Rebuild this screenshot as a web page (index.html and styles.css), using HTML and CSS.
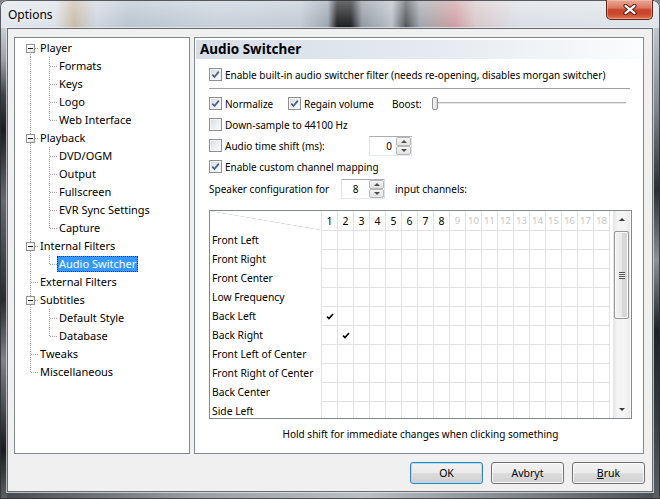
FILE: index.html
```html
<!DOCTYPE html>
<html>
<head>
<meta charset="utf-8">
<title>Options</title>
<link rel="stylesheet" href="styles.css">
</head>
<body>
<div class="window">
  <div class="titlebar">
    <span class="title">Options</span>
    <div class="close">
      <svg width="14" height="11" viewBox="0 0 14 11"><path d="M2.5 1.8 L11.5 9.2 M11.5 1.8 L2.5 9.2" stroke="#5a1c12" stroke-width="4.2" stroke-linecap="round"/><path d="M2.5 1.8 L11.5 9.2 M11.5 1.8 L2.5 9.2" stroke="#fff" stroke-width="2.2" stroke-linecap="round"/></svg>
    </div>
  </div>
  <div class="client">
    <div class="main">
      <div class="tree">
        <div class="tn root first"><span class="exp"></span><span class="lbl">Player</span></div>
        <div class="tn child"><span class="lbl">Formats</span></div>
        <div class="tn child"><span class="lbl">Keys</span></div>
        <div class="tn child"><span class="lbl">Logo</span></div>
        <div class="tn child last"><span class="lbl">Web Interface</span></div>
        <div class="tn root"><span class="exp"></span><span class="lbl">Playback</span></div>
        <div class="tn child"><span class="lbl">DVD/OGM</span></div>
        <div class="tn child"><span class="lbl">Output</span></div>
        <div class="tn child"><span class="lbl">Fullscreen</span></div>
        <div class="tn child"><span class="lbl">EVR Sync Settings</span></div>
        <div class="tn child last"><span class="lbl">Capture</span></div>
        <div class="tn root"><span class="exp"></span><span class="lbl">Internal Filters</span></div>
        <div class="tn child last"><span class="lbl sel">Audio Switcher</span></div>
        <div class="tn root leaf"><span class="lbl">External Filters</span></div>
        <div class="tn root"><span class="exp"></span><span class="lbl">Subtitles</span></div>
        <div class="tn child"><span class="lbl">Default Style</span></div>
        <div class="tn child last"><span class="lbl">Database</span></div>
        <div class="tn root leaf"><span class="lbl">Tweaks</span></div>
        <div class="tn root leaf last"><span class="lbl">Miscellaneous</span></div>
      </div>
      <div class="page">
        <div class="page-head">Audio Switcher</div>
        <div class="page-body">
          <div class="row">
            <span class="cbl"><span class="cb"><svg viewBox="0 0 9 9"><path d="M1.3 4.6 L3.5 7 L7.8 1.6" stroke="#4b5e83" stroke-width="1.7" fill="none"/></svg></span>Enable built-in audio switcher filter (needs re-opening, disables morgan switcher)</span>
          </div>
          <div class="sep"></div>
          <div class="row">
            <span class="cbl w-norm"><span class="cb"><svg viewBox="0 0 9 9"><path d="M1.3 4.6 L3.5 7 L7.8 1.6" stroke="#4b5e83" stroke-width="1.7" fill="none"/></svg></span>Normalize</span>
            <span class="cbl w-regain"><span class="cb"><svg viewBox="0 0 9 9"><path d="M1.3 4.6 L3.5 7 L7.8 1.6" stroke="#4b5e83" stroke-width="1.7" fill="none"/></svg></span>Regain volume</span>
            <span class="boost">Boost:</span>
            <div class="slider"><span class="thumb"></span></div>
          </div>
          <div class="row">
            <span class="cbl"><span class="cb"></span>Down-sample to 44100 Hz</span>
          </div>
          <div class="row">
            <span class="cbl w-shift"><span class="cb"></span>Audio time shift (ms):</span>
            <div class="spin w-shiftbox"><span class="val">0</span><span class="arr"><span class="a-up"></span><span class="a-dn"></span></span></div>
          </div>
          <div class="row">
            <span class="cbl"><span class="cb"><svg viewBox="0 0 9 9"><path d="M1.3 4.6 L3.5 7 L7.8 1.6" stroke="#4b5e83" stroke-width="1.7" fill="none"/></svg></span>Enable custom channel mapping</span>
          </div>
          <div class="row speaker">
            <span class="spk-lbl">Speaker configuration for</span>
            <div class="spin w-spk"><span class="val center">8</span><span class="arr"><span class="a-up"></span><span class="a-dn"></span></span></div>
            <span class="spk-after">input channels:</span>
          </div>
          <div class="grid">
            <div class="gt">
              <div class="gr head">
                <div class="gl diag"></div>
                <div class="gh">1</div><div class="gh">2</div><div class="gh">3</div><div class="gh">4</div><div class="gh">5</div><div class="gh">6</div><div class="gh">7</div><div class="gh">8</div>
                <div class="gh dim">9</div><div class="gh dim">10</div><div class="gh dim">11</div><div class="gh dim">12</div><div class="gh dim">13</div><div class="gh dim">14</div><div class="gh dim">15</div><div class="gh dim">16</div><div class="gh dim">17</div><div class="gh dim">18</div>
              </div>
              <div class="gr"><div class="gl">Front Left</div></div>
              <div class="gr"><div class="gl">Front Right</div></div>
              <div class="gr"><div class="gl">Front Center</div></div>
              <div class="gr"><div class="gl">Low Frequency</div></div>
              <div class="gr"><div class="gl">Back Left</div><div class="gck c1"><svg width="8" height="7" viewBox="0 0 8 7"><path d="M1 3.6 L3 5.6 L7 1" stroke="#000" stroke-width="1.6" fill="none"/></svg></div></div>
              <div class="gr"><div class="gl">Back Right</div><div class="gck c2"><svg width="8" height="7" viewBox="0 0 8 7"><path d="M1 3.6 L3 5.6 L7 1" stroke="#000" stroke-width="1.6" fill="none"/></svg></div></div>
              <div class="gr"><div class="gl">Front Left of Center</div></div>
              <div class="gr"><div class="gl">Front Right of Center</div></div>
              <div class="gr"><div class="gl">Back Center</div></div>
              <div class="gr"><div class="gl">Side Left</div></div>
            </div>
            <div class="vs">
              <div class="vs-btn"><span class="tri-up"></span></div>
              <div class="vs-thumb"><span class="grip"></span></div>
              <div class="vs-track"></div>
              <div class="vs-btn"><span class="tri-dn"></span></div>
            </div>
          </div>
          <div class="hint">Hold shift for immediate changes when clicking something</div>
        </div>
      </div>
    </div>
    <div class="buttons">
      <div class="btn def">OK</div>
      <div class="btn">Avbryt</div>
      <div class="btn"><span><u>B</u>ruk</span></div>
    </div>
  </div>
</div>
</body>
</html>
```

FILE: styles.css
```css
* { box-sizing: border-box; }
html, body { margin: 0; padding: 0; }
body {
  width: 660px;
  height: 499px;
  overflow: hidden;
  font-family: "Noto Sans", "Open Sans", sans-serif;
  font-size: 10px;
  color: #000;
  background: #7d848b;
}

:root {
  --dv: repeating-linear-gradient(to bottom, #a0a0a0 0 1px, transparent 1px 2px);
  --dh: repeating-linear-gradient(to right, #a0a0a0 0 1px, transparent 1px 2px);
}

/* ---------- window frame ---------- */
.window {
  width: 660px;
  height: 499px;
  display: flex;
  flex-direction: column;
  border-radius: 7px 7px 0 0;
  box-shadow: inset 0 0 0 1px rgba(40, 44, 48, 0.75);
  background:
    linear-gradient(to bottom, rgba(255,255,255,0.35), rgba(255,255,255,0) 28px) 0 0 / 100% 28px no-repeat,
    linear-gradient(to right, #e1e7ee 0, #dbe1e8 55px, #c9baa8 74px, #cdd5de 96px, #b8c4d0 130px, #c6d0da 220px, #c0cad4 300px, #9aa4ae 328px, #1c1d1f 337px, #1c1d1f 351px, #8f97a0 362px, #b8bfc6 392px, #505358 406px, #a0a6ac 420px, #b7a1a4 440px, #cf9ca2 455px, #d7c7c9 475px, #d9dfe5 520px, #dee4ea 660px) 0 0 / 100% 28px no-repeat,
    linear-gradient(to bottom, #c9cfd5 28px, #9aa1a8 60px, #3f4347 95px, #1d1e20 130px, #65696e 200px, #2a2c2e 300px, #7d8288 360px, #1b1c1e 450px, #5d6165 499px) 0 0 / 7px 100% no-repeat,
    linear-gradient(to bottom, #bfc6cd 28px, #7d848a 110px, #2b2d30 190px, #8c9196 260px, #1f2124 330px, #3a3d40 420px, #5a5e62 499px) 653px 0 / 7px 100% no-repeat,
    linear-gradient(to right, #45484c, #9aa0a6 30%, #b9bfc5 55%, #7c8288 80%, #4a4e52) 0 492px / 100% 7px no-repeat,
    #8f969d;
}
.titlebar {
  height: 28px;
  flex: none;
  display: flex;
  align-items: flex-start;
}
.title {
  margin: 6px 0 0 8px;
  font-size: 12px;
  line-height: 17px;
  color: #000;
  text-shadow: 0 0 6px rgba(255,255,255,0.9);
}
.close {
  margin-left: auto;
  margin-right: 7px;
  width: 47px;
  height: 20px;
  border: 1px solid #5e2419;
  border-top: none;
  border-radius: 0 0 5px 5px;
  background: linear-gradient(to bottom, #e9a996 0, #dc7b63 40%, #c8452a 52%, #c9482d 75%, #e07a55 100%);
  box-shadow: inset 0 0 0 1px rgba(255, 210, 190, 0.45);
  display: flex;
  align-items: center;
  justify-content: center;
}
.close svg { display: block; }

.client {
  flex: 1;
  margin: 0 7px 7px 7px;
  border: 1px solid #646a70;
  box-shadow: 0 0 0 1px rgba(235, 240, 245, 0.7);
  background: #f0f0f0;
  padding: 8px 7px 7px 6px;
  display: flex;
  flex-direction: column;
}
.main {
  height: 417px;
  display: flex;
}

/* ---------- tree ---------- */
.tree {
  width: 176px;
  flex: none;
  border: 1px solid #828790;
  background: #fff;
  padding-top: 1px;
  font-size: 11px;
}
.tn {
  height: 18px;
  display: flex;
  align-items: center;
  white-space: nowrap;
  background-repeat: no-repeat;
}
.root {
  padding-left: 11px;
  background-image: var(--dv), var(--dh);
  background-size: 1px 18px, 4px 1px;
  background-position: 15px 0, 20px 9px;
}
.root.first {
  background-size: 1px 9px, 4px 1px;
  background-position: 15px 9px, 20px 9px;
}
.root.leaf {
  padding-left: 25px;
  background-size: 1px 18px, 8px 1px;
  background-position: 15px 0, 16px 9px;
}
.root.leaf.last {
  background-size: 1px 10px, 8px 1px;
}
.child {
  padding-left: 44px;
  background-image: var(--dv), var(--dv), var(--dh);
  background-size: 1px 18px, 1px 18px, 8px 1px;
  background-position: 15px 0, 34px 0, 35px 9px;
}
.child.last {
  background-size: 1px 18px, 1px 10px, 8px 1px;
}
.exp {
  width: 9px;
  height: 9px;
  flex: none;
  margin-right: 5px;
  border: 1px solid #919191;
  background: linear-gradient(135deg, #ffffff 35%, #dcdcdc);
  display: flex;
  align-items: center;
  justify-content: center;
}
.exp::after {
  content: "";
  width: 5px;
  height: 1px;
  background: #1e1e1e;
}
.lbl { line-height: 16px; }
.lbl.sel {
  margin-left: -2px;
  padding: 0 2px 0 2px;
  height: 16px;
  background: #3399ff;
  color: #fff;
  outline: 1px dotted #1a2a3a;
  outline-offset: -1px;
}

/* ---------- page ---------- */
.page {
  width: 450px;
  flex: none;
  margin-left: 4px;
  border: 1px solid #828790;
  background: #fff;
  display: flex;
  flex-direction: column;
}
.page-head {
  margin: 2px 1px 0 1px;
  height: 19px;
  padding-left: 4px;
  font-weight: bold;
  font-size: 13.5px;
  line-height: 19px;
  background: linear-gradient(to right, #d6dde6 0, #e6ebf1 55%, #fbfcfd 100%);
}
.page-body {
  padding: 5px 0 0 14px;
  display: flex;
  flex-direction: column;
}
.row {
  height: 21px;
  display: flex;
  align-items: center;
  white-space: nowrap;
}
.row.speaker { height: 23px; }
.sep {
  width: 421px;
  height: 1px;
  background: #a0a0a0;
  margin: 3px 0 4px 0;
}
.cbl {
  display: flex;
  align-items: center;
}
.cb {
  width: 13px;
  height: 13px;
  flex: none;
  margin-right: 3px;
  border: 1px solid #8e8f8f;
  background: linear-gradient(135deg, #d6d9de 0, #eceef0 50%, #fbfbfb 100%);
  box-shadow: inset 0 0 0 1px #f4f4f4;
  display: flex;
  align-items: center;
  justify-content: center;
}
.cb svg { width: 9px; height: 9px; display: block; }
.w-norm { width: 79px; }
.w-regain { width: 104px; }
.w-shift { width: 160px; }
.boost { width: 40px; }
.slider {
  width: 194px;
  height: 21px;
  display: flex;
  align-items: center;
  background:
    linear-gradient(#b4b4b4, #b4b4b4) 5px 9px / 189px 1px no-repeat,
    linear-gradient(#e6e6e6, #e6e6e6) 5px 10px / 189px 1px no-repeat;
}
.thumb {
  width: 6px;
  height: 13px;
  border: 1px solid #8e8f8f;
  border-radius: 2px;
  background: linear-gradient(to right, #f7f7f7, #dcdcdc);
}
.spin {
  height: 20px;
  display: flex;
  border: 1px solid #abadb3;
  border-color: #abadb3 #dbdfe6 #e3e9ef #e2e3ea;
  background: #fff;
}
.w-shiftbox { width: 43px; }
.w-spk { width: 44px; }
.spin .val {
  flex: 1;
  text-align: right;
  padding-right: 4px;
  line-height: 18px;
}
.spin .val.center { text-align: center; padding-right: 0; }
.arr {
  width: 15px;
  display: flex;
  flex-direction: column;
}
.arr span {
  flex: 1;
  border: 1px solid #b8b8b8;
  border-radius: 2px;
  background: linear-gradient(to bottom, #f4f4f4, #e2e2e2);
  display: flex;
  align-items: center;
  justify-content: center;
}
.a-up::after, .a-dn::after {
  content: "";
  width: 0;
  height: 0;
  border-left: 3px solid transparent;
  border-right: 3px solid transparent;
}
.a-up::after { border-bottom: 3px solid #4d4d4d; }
.a-dn::after { border-top: 3px solid #4d4d4d; }
.spk-lbl { width: 132px; }
.spk-after { margin-left: 10px; }

/* ---------- grid ---------- */
.grid {
  width: 423px;
  height: 209px;
  margin-top: 10px;
  border: 1px solid #828790;
  display: flex;
  overflow: hidden;
  background: #fff;
}
.gt {
  width: 400px;
  flex: none;
}
.gr {
  height: 19px;
  flex: none;
  display: grid;
  grid-template-columns: 112px repeat(18, 16px);
  grid-template-rows: 18px;
  align-items: center;
  background-image:
    repeating-linear-gradient(to right, transparent 0 15px, #e2e2e2 15px 16px),
    linear-gradient(#e2e2e2, #e2e2e2);
  background-size: 304px 100%, 289px 1px;
  background-position: 96px 0, 111px 100%;
  background-repeat: no-repeat;
}
.gr.head {
  height: 20px;
  grid-template-rows: 19px;
}
.gl {
  padding-left: 2px;
  font-size: 10.3px;
  white-space: nowrap;
  align-self: stretch;
  display: flex;
  align-items: center;
}
.gl.diag {
  background: linear-gradient(to top right, transparent calc(50% - 0.6px), #d8d8d8 50%, transparent calc(50% + 0.6px));
  margin-right: 1px;
}
.gh {
  text-align: center;
  padding-right: 1px;
  font-size: 10.5px;
}
.gh.dim { color: #c6c6c6; font-size: 9.5px; }
.gck {
  display: flex;
  justify-content: center;
  padding-right: 1px;
}
.gck.c1 { grid-column: 2; }
.gck.c2 { grid-column: 3; }

.vs {
  width: 17px;
  margin-left: 3px;
  flex: none;
  display: flex;
  flex-direction: column;
  background: linear-gradient(to right, #e4e4e4, #f4f4f4 25%, #f4f4f4 75%, #e8e8e8);
}
.vs-btn {
  height: 17px;
  display: flex;
  align-items: center;
  justify-content: center;
}
.tri-up, .tri-dn {
  width: 0;
  height: 0;
  border-left: 3px solid transparent;
  border-right: 3px solid transparent;
}
.tri-up { border-bottom: 3px solid #3a3a3a; }
.tri-dn { border-top: 3px solid #3a3a3a; }
.vs-thumb {
  margin: 3px 1px 0 1px;
  height: 88px;
  border: 1px solid #979797;
  border-radius: 2px;
  background: linear-gradient(to right, #f3f3f3, #e9e9e9 50%, #d9d9d9 51%, #d6d6d6);
  box-shadow: inset 0 0 0 1px #fafafa;
  display: flex;
  align-items: center;
  justify-content: center;
}
.grip {
  width: 6px;
  height: 7px;
  background: repeating-linear-gradient(to bottom, #4f4f4f 0 1px, #f5f5f5 1px 2px);
}
.vs-track { flex: 1; }

.hint {
  margin-top: 8px;
  width: 423px;
  text-align: center;
  line-height: 15px;
}

/* ---------- buttons ---------- */
.buttons {
  margin-top: 8px;
  display: flex;
  justify-content: flex-end;
  gap: 8px;
}
.btn {
  width: 73px;
  height: 22px;
  border: 1px solid #707070;
  border-radius: 3px;
  background: linear-gradient(to bottom, #f2f2f2 0, #ebebeb 50%, #dddddd 51%, #cfcfcf 100%);
  box-shadow: inset 0 0 0 1px #fbfbfb;
  display: flex;
  align-items: center;
  justify-content: center;
  font-size: 10.5px;
}
.btn.def {
  border-color: #3c7fb1;
  box-shadow: inset 0 0 0 1px #9fe3fb;
}
```
